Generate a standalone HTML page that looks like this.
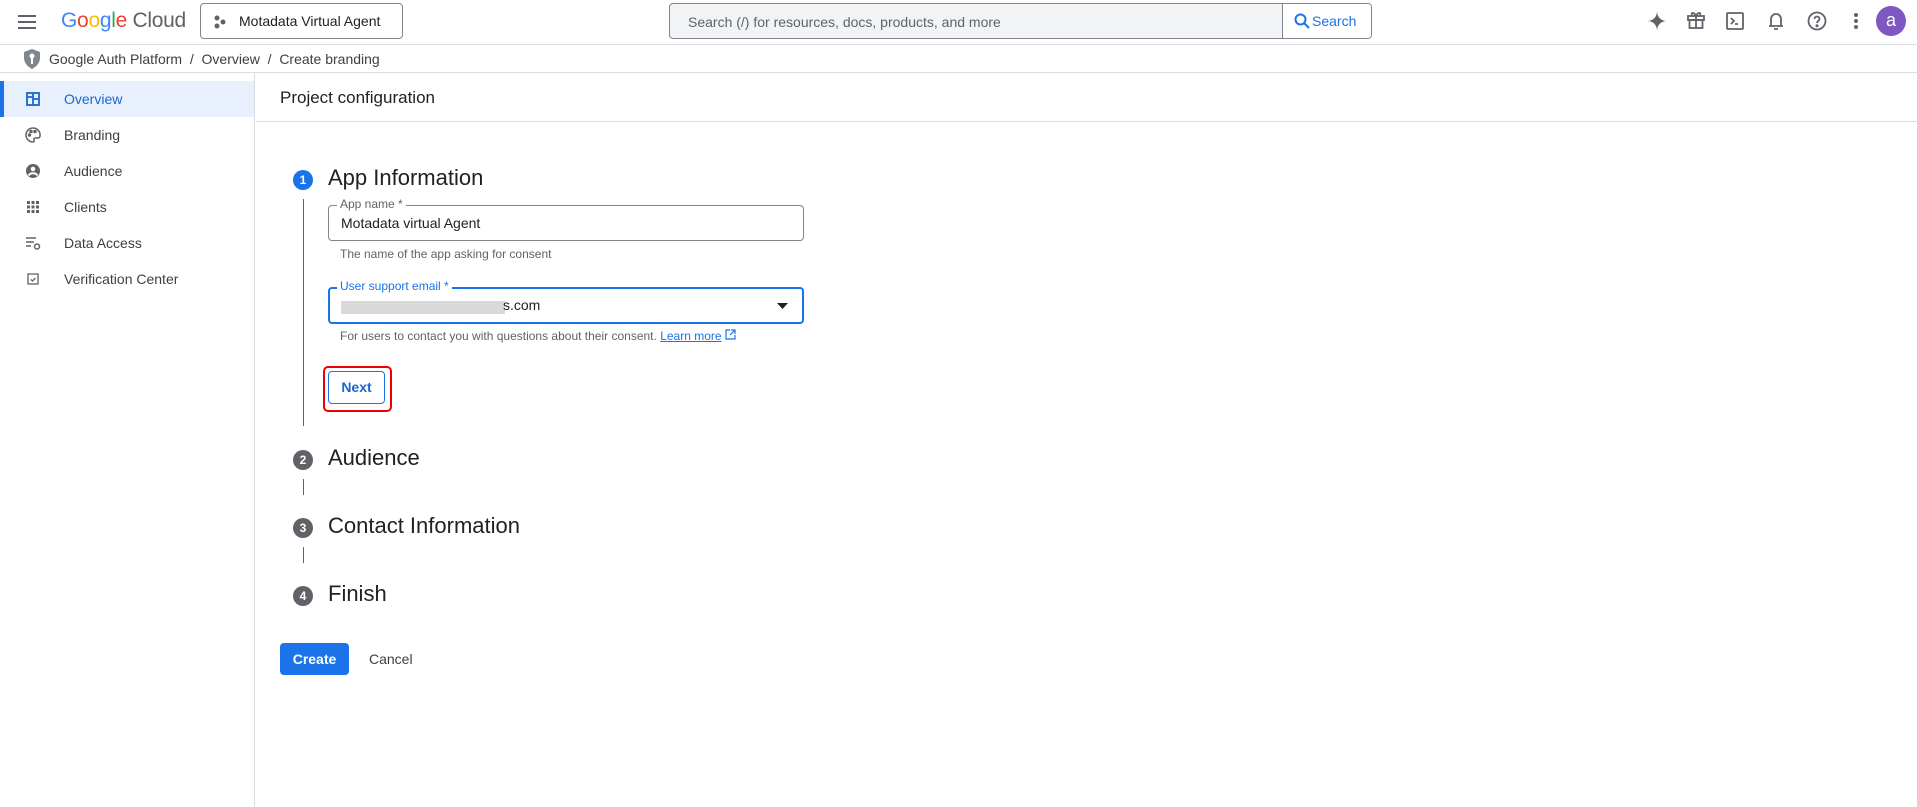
<!DOCTYPE html>
<html><head><meta charset="utf-8"><style>
*{box-sizing:border-box;margin:0;padding:0}
body{width:1917px;height:807px;overflow:hidden;background:#fff;font-family:"Liberation Sans",Arial,sans-serif;color:#202124;position:relative}
.abs{position:absolute}
.hdr{left:0;top:0;width:1917px;height:45px;border-bottom:1px solid #dadce0}
.bc{left:0;top:45px;width:1917px;height:28px;border-bottom:1px solid #dadce0;font-size:14px;color:#3c4043}
.side{left:0;top:73px;width:255px;height:734px;border-right:1px solid #dadce0}
.item{position:absolute;left:0;width:254px;height:36px;font-size:14px;color:#3c4043;line-height:36px}
.item span{position:absolute;left:64px}
.item svg{position:absolute;left:25px;top:10px}
.step{font-size:22px;color:#202124}
.circ{width:20px;height:20px;border-radius:50%;background:#5f6368;color:#fff;font-size:12px;font-weight:bold;text-align:center;line-height:20px}
.field{border:1px solid #80868b;border-radius:4px}
.lbl{font-size:12px;background:#fff;padding:0 3px;color:#5f6368}
.help{font-size:12px;color:#5f6368}
</style></head><body>
<div class="abs hdr">
  <svg class="abs" style="left:17px;top:12px" width="20" height="20" viewBox="0 0 20 20"><path d="M1 4h18M1 10h18M1 16h18" stroke="#5f6368" stroke-width="2"/></svg>
  <div class="abs" style="left:61px;top:9px;font-size:21px;letter-spacing:-0.3px"><span style="color:#4285f4">G</span><span style="color:#ea4335">o</span><span style="color:#fbbc04">o</span><span style="color:#4285f4">g</span><span style="color:#34a853">l</span><span style="color:#ea4335">e</span><span style="color:#5f6368"> Cloud</span></div>
  <div class="abs" style="left:200px;top:3px;width:203px;height:36px;border:1px solid #80868b;border-radius:4px">
    <svg class="abs" style="left:12px;top:11px" width="14" height="14"><circle cx="4" cy="3" r="2.5" fill="#5f6368"/><circle cx="10" cy="7" r="2.5" fill="#5f6368"/><circle cx="4" cy="11" r="2.5" fill="#5f6368"/></svg>
    <span class="abs" style="left:38px;top:9px;font-size:14px;color:#202124">Motadata Virtual Agent</span>
  </div>
  <div class="abs" style="left:669px;top:3px;width:703px;height:36px;border:1px solid #80868b;border-radius:4px;background:#f1f3f4;overflow:hidden">
    <span class="abs" style="left:18px;top:10px;font-size:14px;color:#5f6368">Search (/) for resources, docs, products, and more</span>
    <div class="abs" style="left:612px;top:0;width:90px;height:34px;background:#fff;border-left:1px solid #80868b">
      <svg class="abs" style="left:11px;top:9px" width="16" height="16"><circle cx="6.5" cy="6.5" r="5" fill="none" stroke="#1a73e8" stroke-width="2"/><path d="M10 10l5 5" stroke="#1a73e8" stroke-width="2"/></svg>
      <span class="abs" style="left:29px;top:9px;font-size:14px;color:#1a73e8">Search</span>
    </div>
  </div>
  <svg class="abs" style="left:1647px;top:11px" width="20" height="20" viewBox="0 0 20 20"><path d="M10 0C10 6 14 10 20 10 14 10 10 14 10 20 10 14 6 10 0 10 6 10 10 6 10 0Z" fill="#5f6368"/></svg>
  <svg class="abs" style="left:1686px;top:10px" width="20" height="20" viewBox="0 0 20 20" fill="none" stroke="#5f6368" stroke-width="1.8"><rect x="2" y="6" width="16" height="4"/><rect x="3.5" y="10" width="13" height="8"/><path d="M10 6v12M10 6C8 2 5 2 6 5M10 6c2-4 5-4 4-1"/></svg>
  <svg class="abs" style="left:1726px;top:12px" width="18" height="18" viewBox="0 0 18 18" fill="none" stroke="#5f6368" stroke-width="1.8"><rect x="1" y="1" width="16" height="16" rx="1"/><path d="M5 6l3 3-3 3M9 12h3"/></svg>
  <svg class="abs" style="left:1767px;top:10px" width="18" height="22" viewBox="0 0 18 22" fill="none" stroke="#5f6368" stroke-width="1.8"><path d="M4 16V9a5 5 0 0110 0v7M2 16h14M7 19h4"/></svg>
  <svg class="abs" style="left:1807px;top:11px" width="20" height="20" viewBox="0 0 20 20" fill="none" stroke="#5f6368" stroke-width="1.8"><circle cx="10" cy="10" r="8.5"/><path d="M7.5 8a2.5 2.5 0 115 0c0 2-2.5 2-2.5 4"/><circle cx="10" cy="14.8" r=".6" fill="#5f6368"/></svg>
  <svg class="abs" style="left:1853px;top:12px" width="6" height="18"><circle cx="3" cy="3" r="2" fill="#5f6368"/><circle cx="3" cy="9" r="2" fill="#5f6368"/><circle cx="3" cy="15" r="2" fill="#5f6368"/></svg>
  <div class="abs" style="left:1876px;top:6px;width:30px;height:30px;border-radius:50%;background:#7e57c2;color:#fff;font-size:18px;text-align:center;line-height:28px">a</div>
</div>
<div class="abs bc">
  <svg class="abs" style="left:24px;top:4px" width="16" height="20" viewBox="0 0 16 20"><path d="M8 0L0 3v6c0 5 4 9 8 11 4-2 8-6 8-11V3z" fill="#80868b"/><circle cx="8" cy="7" r="2.5" fill="#fff"/><path d="M7 9h2v6H7z" fill="#fff"/></svg>
  <span class="abs" style="left:49px;top:6px">Google Auth Platform&nbsp; / &nbsp;Overview&nbsp; / &nbsp;Create branding</span>
</div>
<div class="abs side">
  <div class="item" style="top:8px;background:#e8f0fe;color:#1967d2;border-left:4px solid #1a73e8"><svg style="left:21px" width="16" height="16" viewBox="0 0 16 16" fill="none" stroke="#1967d2" stroke-width="1.8"><rect x="2" y="2" width="12" height="12"/><path d="M8 2v12M8 8h6M2 6h6"/></svg><span style="left:60px">Overview</span></div>
  <div class="item" style="top:44px"><svg width="16" height="16" viewBox="0 0 16 16" fill="none" stroke="#5f6368" stroke-width="1.5"><path d="M8 1a7 7 0 000 14c1 0 1.5-1 1-2s0-2 1.5-2H13a2 2 0 002-2A7 7 0 008 1z"/><circle cx="4.5" cy="8" r="1" fill="#5f6368"/><circle cx="6" cy="4.5" r="1" fill="#5f6368"/><circle cx="10" cy="4.5" r="1" fill="#5f6368"/></svg><span>Branding</span></div>
  <div class="item" style="top:80px"><svg width="16" height="16" viewBox="0 0 16 16"><circle cx="8" cy="8" r="7" fill="#5f6368"/><circle cx="8" cy="6" r="2.3" fill="#fff"/><path d="M3.5 12.5c2-3 7-3 9 0" stroke="#fff" stroke-width="2" fill="none"/></svg><span>Audience</span></div>
  <div class="item" style="top:116px"><svg width="16" height="16" viewBox="0 0 16 16" fill="#5f6368"><rect x="2" y="2" width="3" height="3"/><rect x="6.5" y="2" width="3" height="3"/><rect x="11" y="2" width="3" height="3"/><rect x="2" y="6.5" width="3" height="3"/><rect x="6.5" y="6.5" width="3" height="3"/><rect x="11" y="6.5" width="3" height="3"/><rect x="2" y="11" width="3" height="3"/><rect x="6.5" y="11" width="3" height="3"/><rect x="11" y="11" width="3" height="3"/></svg><span>Clients</span></div>
  <div class="item" style="top:152px"><svg width="17" height="16" viewBox="0 0 17 16" fill="none" stroke="#5f6368" stroke-width="1.5"><path d="M1 3h10M1 7h8M1 11h5"/><circle cx="12" cy="11.5" r="2.5"/></svg><span>Data Access</span></div>
  <div class="item" style="top:188px"><svg width="16" height="16" viewBox="0 0 16 16" fill="none" stroke="#5f6368" stroke-width="1.3"><rect x="3" y="3" width="10" height="10"/><path d="M6 8.5l1.5 1.5 3-3"/></svg><span>Verification Center</span></div>
</div>
<div class="abs" style="left:256px;top:73px;width:1661px;height:49px;border-bottom:1px solid #dadce0"><span class="abs" style="left:24px;top:15px;font-size:17px">Project configuration</span></div>

<div class="abs circ" style="left:293px;top:170px;background:#1a73e8">1</div>
<div class="abs step" style="left:328px;top:165px">App Information</div>
<div class="abs" style="left:303px;top:199px;width:1px;height:227px;background:#5f6368"></div>

<div class="abs field" style="left:328px;top:205px;width:476px;height:36px"><span class="abs" style="left:12px;top:9px;font-size:14px;color:#202124">Motadata virtual Agent</span></div>
<span class="abs lbl" style="left:337px;top:197px">App name *</span>
<div class="abs help" style="left:340px;top:247px">The name of the app asking for consent</div>

<div class="abs" style="left:328px;top:287px;width:476px;height:37px;border:2px solid #1a73e8;border-radius:4px">
  <div class="abs" style="left:11px;top:12px;width:164px;height:13px;background:#d9d9d9"></div>
  <span class="abs" style="left:173px;top:8px;font-size:14px;color:#202124">s.com</span>
  <svg class="abs" style="left:447px;top:13px" width="12" height="8"><path d="M0 1h11L5.5 7z" fill="#202124"/></svg>
</div>
<span class="abs lbl" style="left:337px;top:279px;color:#1a73e8">User support email *</span>
<div class="abs help" style="left:340px;top:329px">For users to contact you with questions about their consent. <span style="color:#1a73e8;text-decoration:underline">Learn more</span> <svg width="11" height="11" viewBox="0 0 11 11" fill="none" stroke="#1a73e8" stroke-width="1.2"><path d="M5 1H1v9h9V6M6 1h4v4M10 1L5 6"/></svg></div>

<div class="abs" style="left:323px;top:366px;width:69px;height:46px;border:2.5px solid #e00;border-radius:5px"></div>
<div class="abs" style="left:328px;top:371px;width:57px;height:33px;border:1px solid #1a73e8;border-radius:4px;color:#1967d2;font-size:14px;font-weight:bold;text-align:center;line-height:31px">Next</div>

<div class="abs circ" style="left:293px;top:450px">2</div>
<div class="abs step" style="left:328px;top:445px">Audience</div>
<div class="abs" style="left:303px;top:479px;width:1px;height:16px;background:#5f6368"></div>
<div class="abs circ" style="left:293px;top:518px">3</div>
<div class="abs step" style="left:328px;top:513px">Contact Information</div>
<div class="abs" style="left:303px;top:547px;width:1px;height:16px;background:#5f6368"></div>
<div class="abs circ" style="left:293px;top:586px">4</div>
<div class="abs step" style="left:328px;top:581px">Finish</div>

<div class="abs" style="left:280px;top:643px;width:69px;height:32px;background:#1a73e8;border-radius:4px;color:#fff;font-size:14px;font-weight:bold;text-align:center;line-height:32px">Create</div>
<div class="abs" style="left:369px;top:651px;font-size:14px;color:#3c4043">Cancel</div>
</body></html>
